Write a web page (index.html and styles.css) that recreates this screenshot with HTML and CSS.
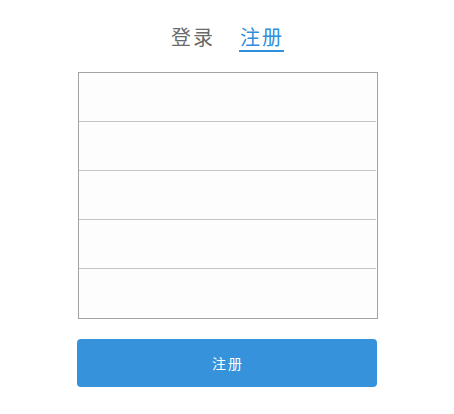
FILE: index.html
```html
<!DOCTYPE html>
<html>
<head>
<meta charset="utf-8">
<link rel="stylesheet" href="styles.css">
</head>
<body>
<div class="wrap">
  <div class="tabs">
    <span class="tab">登录</span>
    <span class="tab active">注册</span>
  </div>
  <div class="fields">
    <input class="field" type="text">
    <input class="field" type="text">
    <input class="field" type="text">
    <input class="field" type="password">
    <input class="field" type="password">
  </div>
  <button class="submit">注册</button>
</div>
</body>
</html>
```
FILE: styles.css
```css
html, body {
  margin: 0;
  padding: 0;
  background: #ffffff;
  font-family: "Noto Sans CJK SC", "Noto Sans", sans-serif;
}
.wrap {
  width: 300px;
  margin: 0 auto;
  display: flex;
  flex-direction: column;
}
.tabs {
  display: flex;
  justify-content: center;
  gap: 24px;
  padding-top: 24px;
  margin-bottom: 20px;
}
.tab {
  font-size: 20px;
  line-height: 26px;
  letter-spacing: 2px;
  color: #6a6a6a;
  padding: 0 0 0 1px;
  border-bottom: 2px solid transparent;
}
.tab.active {
  color: #2f8fdb;
  border-bottom-color: #2f8fdb;
}
.fields {
  margin-left: 1px;
  width: 298px;
  border: 1px solid #a3a3a3;
  display: flex;
  flex-direction: column;
  background: #fdfdfd;
}
.field {
  display: block;
  box-sizing: border-box;
  width: 297px;
  height: 49px;
  margin: 0;
  padding: 0 10px;
  border: 0;
  border-bottom: 1px solid #c4c4c4;
  background: #fdfdfd;
  outline: none;
}
.field:last-child {
  border-bottom-color: #fdfdfd;
}
.submit {
  margin-top: 20px;
  width: 300px;
  height: 48px;
  border: 0;
  border-radius: 4px;
  background: #3592db;
  color: #ffffff;
  font-family: "Noto Sans CJK SC", "Noto Sans", sans-serif;
  font-size: 14px;
  letter-spacing: 2px;
  padding-left: 8px;
}
```
